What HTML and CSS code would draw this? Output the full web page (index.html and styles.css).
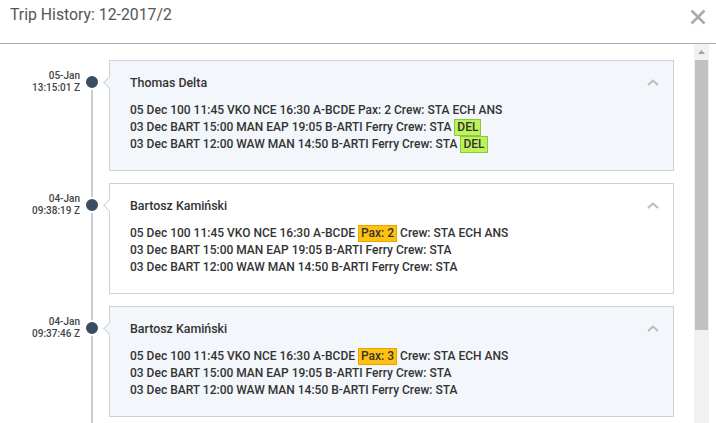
FILE: index.html
```html
<!DOCTYPE html>
<html>
<head>
<meta charset="utf-8">
<link rel="stylesheet" href="styles.css">
</head>
<body>
<div class="dialog">
  <div class="header">
    <div class="title">Trip History: 12-2017/2</div>
    <svg class="close" width="16" height="16" viewBox="0 0 16 16"><path d="M1.5 1.5 L14.5 14.5 M14.5 1.5 L1.5 14.5" stroke="#aaa" stroke-width="2.6" fill="none"/></svg>
  </div>
  <div class="body">
    <div class="timeline">
      <div class="item">
        <div class="when"><div>05-Jan</div><div>13:15:01 Z</div></div>
        <div class="rail"><div class="dot"></div></div>
        <div class="card tinted">
          <div class="card-head">
            <div class="name">Thomas Delta</div>
            <svg class="chev" width="12" height="7" viewBox="0 0 12 7"><path d="M1 6 L6 1.5 L11 6" stroke="#bbb" stroke-width="2" fill="none"/></svg>
          </div>
          <div class="lines">
            <div>05 Dec 100 11:45 VKO NCE 16:30 A-BCDE Pax: 2 Crew: STA ECH ANS</div>
            <div>03 Dec BART 15:00 MAN EAP 19:05 B-ARTI Ferry Crew: STA <span class="hl green">DEL</span></div>
            <div>03 Dec BART 12:00 WAW MAN 14:50 B-ARTI Ferry Crew: STA <span class="hl green">DEL</span></div>
          </div>
        </div>
      </div>
      <div class="item">
        <div class="when"><div>04-Jan</div><div>09:38:19 Z</div></div>
        <div class="rail"><div class="dot"></div></div>
        <div class="card">
          <div class="card-head">
            <div class="name">Bartosz Kamiński</div>
            <svg class="chev" width="12" height="7" viewBox="0 0 12 7"><path d="M1 6 L6 1.5 L11 6" stroke="#bbb" stroke-width="2" fill="none"/></svg>
          </div>
          <div class="lines">
            <div>05 Dec 100 11:45 VKO NCE 16:30 A-BCDE <span class="hl amber">Pax: 2</span> Crew: STA ECH ANS</div>
            <div>03 Dec BART 15:00 MAN EAP 19:05 B-ARTI Ferry Crew: STA</div>
            <div>03 Dec BART 12:00 WAW MAN 14:50 B-ARTI Ferry Crew: STA</div>
          </div>
        </div>
      </div>
      <div class="item">
        <div class="when"><div>04-Jan</div><div>09:37:46 Z</div></div>
        <div class="rail"><div class="dot"></div></div>
        <div class="card tinted">
          <div class="card-head">
            <div class="name">Bartosz Kamiński</div>
            <svg class="chev" width="12" height="7" viewBox="0 0 12 7"><path d="M1 6 L6 1.5 L11 6" stroke="#bbb" stroke-width="2" fill="none"/></svg>
          </div>
          <div class="lines">
            <div>05 Dec 100 11:45 VKO NCE 16:30 A-BCDE <span class="hl amber">Pax: 3</span> Crew: STA ECH ANS</div>
            <div>03 Dec BART 15:00 MAN EAP 19:05 B-ARTI Ferry Crew: STA</div>
            <div>03 Dec BART 12:00 WAW MAN 14:50 B-ARTI Ferry Crew: STA</div>
          </div>
        </div>
      </div>
    </div>
    <div class="scrollbar">
      <div class="sb-btn"><svg width="7" height="4" viewBox="0 0 7 4"><path d="M0 4 L3.5 0 L7 4 Z" fill="#a3a3a3"/></svg></div>
      <div class="sb-thumb"></div>
    </div>
  </div>
</div>
</body>
</html>
```
FILE: styles.css
```css
html, body {
  margin: 0;
  padding: 0;
  background: #fff;
}
body {
  font-family: Roboto, "Liberation Sans", sans-serif;
  color: #333;
  width: 716px;
  height: 423px;
  overflow: hidden;
}
.dialog {
  display: flex;
  flex-direction: column;
  height: 423px;
}
.header {
  box-sizing: border-box;
  border-bottom: 1px solid #a9a9a9;
  display: flex;
  justify-content: space-between;
  align-items: flex-start;
  padding: 5px 10px 0 10px;
  height: 44px;
}
.title {
  font-size: 15.8px;
  line-height: 20px;
  color: #555;
  font-weight: 400;
}
.close {
  margin-top: 4px;
}
.body {
  flex: 1;
  display: flex;
  min-height: 0;
  padding-right: 7px;
}
.timeline {
  flex: 1;
  overflow: hidden;
  padding-top: 16px;
  padding-right: 20px;
}
.item {
  display: flex;
  padding-bottom: 12px;
}
.when {
  width: 80px;
  flex: none;
  text-align: right;
  font-size: 10px;
  line-height: 12px;
  font-weight: 500;
  color: #444;
  padding-top: 10px;
}
.rail {
  width: 24px;
  flex: none;
  margin-bottom: -12px;
  background: linear-gradient(#c9cdd3, #c9cdd3) center top / 2px 100% no-repeat;
}
.item:first-child .rail {
  background-position: center bottom;
  background-size: 2px calc(100% - 22px);
}
.dot {
  width: 12px;
  height: 12px;
  border-radius: 50%;
  background: #3b4d62;
  border: 2px solid #fff;
  margin: 14px auto 0;
}
.card {
  position: relative;
  flex: 1;
  margin-left: 5px;
  border: 1px solid #cdd2d9;
  background: #fff;
  padding: 13px 13px 17px 20px;
}
.card.tinted {
  background: #f3f6fa;
}
.card::before {
  content: "";
  position: absolute;
  left: -5px;
  top: 17px;
  width: 8px;
  height: 8px;
  background: inherit;
  border-left: 1px solid #cdd2d9;
  border-bottom: 1px solid #cdd2d9;
  transform: rotate(45deg);
}
.card-head {
  display: flex;
  justify-content: space-between;
  align-items: center;
  height: 17px;
}
.name {
  font-size: 12.4px;
  font-weight: 500;
  color: #333;
  line-height: 17px;
}
.chev {
  margin-right: 1px;
}
.lines {
  margin-top: 11px;
  font-size: 12px;
  font-weight: 500;
  line-height: 17px;
  color: #333;
  white-space: nowrap;
}
.hl {
  display: inline-block;
  line-height: 15px;
  padding: 0 2px;
  border: 1px solid;
}
.hl.green {
  background: #bcf25a;
  border-color: #8dc63f;
}
.hl.amber {
  background: #ffc20e;
  border-color: #e5a400;
}
.scrollbar {
  width: 15px;
  flex: none;
  background: #f1f1f1;
  display: flex;
  flex-direction: column;
}
.sb-btn {
  height: 15px;
  display: flex;
  align-items: center;
  justify-content: center;
}
.sb-thumb {
  height: 270px;
  margin: 1px 1px 0;
  background: #c1c1c1;
}
```
